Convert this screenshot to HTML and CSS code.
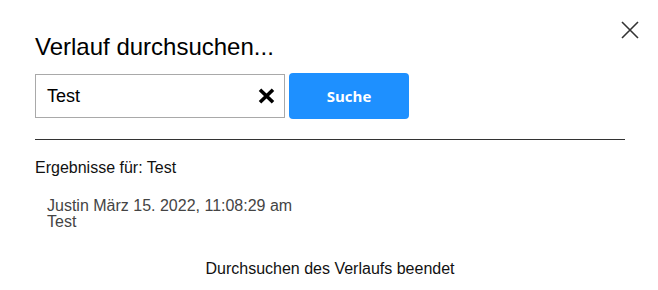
FILE: index.html
```html
<!DOCTYPE html>
<html lang="de">
<head>
<meta charset="utf-8">
<title>Verlauf durchsuchen</title>
<link rel="stylesheet" href="styles.css">
</head>
<body>
<div class="dialog">
  <button class="close" aria-label="Schließen">
    <svg width="18" height="18" viewBox="0 0 18 18"><path d="M1 1L17 17M17 1L1 17" stroke="#333" stroke-width="1.6" fill="none"/></svg>
  </button>
  <h1 class="title">Verlauf durchsuchen...</h1>
  <div class="search-row">
    <div class="field">
      <span class="field-text">Test</span>
      <svg class="clear" width="17" height="16" viewBox="0 0 17 16"><path d="M2 1.8L15 14.2M15 1.8L2 14.2" stroke="#000" stroke-width="3.6" fill="none"/></svg>
    </div>
    <button class="search-btn">Suche</button>
  </div>
  <hr class="divider">
  <div class="results-label">Ergebnisse für: Test</div>
  <div class="result">
    <div>Justin März 15. 2022, 11:08:29 am</div>
    <div>Test</div>
  </div>
  <div class="done">Durchsuchen des Verlaufs beendet</div>
</div>
</body>
</html>
```
FILE: styles.css
```css
html, body {
  margin: 0;
  padding: 0;
  background: #fff;
}
body {
  font-family: "Liberation Sans", Arial, sans-serif;
  color: #111;
}
.dialog {
  position: relative;
  width: 590px;
  padding: 33px 33px 0 35px;
}
.close {
  position: absolute;
  top: 21px;
  right: 19px;
  padding: 0;
  border: 0;
  background: none;
  line-height: 0;
}
.title {
  margin: 0;
  font-size: 24px;
  font-weight: normal;
  line-height: 27px;
  color: #000;
}
.search-row {
  display: flex;
  align-items: center;
  gap: 4px;
  margin-top: 13px;
}
.field {
  box-sizing: border-box;
  width: 250px;
  height: 44px;
  border: 1px solid #a9a9a9;
  display: flex;
  align-items: center;
  justify-content: space-between;
  padding: 0 9px 0 11px;
}
.field-text {
  font-size: 18px;
  color: #000;
}
.search-btn {
  width: 120px;
  height: 46px;
  border: 0;
  border-radius: 4px;
  background: #1e90ff;
  color: #fff;
  font-family: "Open Sans", sans-serif;
  font-weight: 700;
  font-size: 15px;
  padding: 0;
}
.divider {
  margin: 20px 0 0;
  border: 0;
  border-top: 1px solid #333;
  height: 0;
}
.results-label {
  margin-top: 19px;
  font-size: 16px;
  line-height: 18px;
}
.result {
  margin-top: 21px;
  padding-left: 12px;
  font-size: 16px;
  line-height: 16px;
  color: #444;
}
.done {
  margin-top: 30px;
  text-align: center;
  font-size: 16px;
  line-height: 18px;
}
```
